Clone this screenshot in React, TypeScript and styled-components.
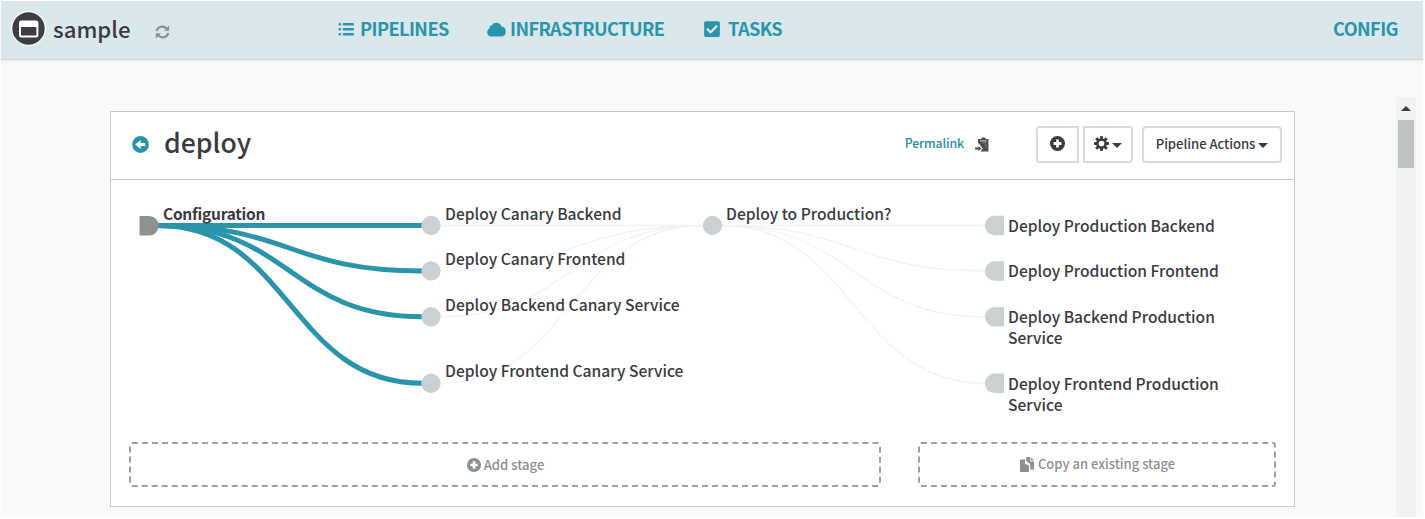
import React from 'react';
import styled, { createGlobalStyle } from 'styled-components';
import { FaCheckSquare } from 'react-icons/fa';

const Global = createGlobalStyle`
  * { box-sizing: border-box; }
  body { margin: 0; background: #fff; font-family: "Noto Sans CJK SC", "Open Sans", sans-serif; color: #3a3a40; overflow: hidden; }
`;

const Page = styled.div`
  width: 1422px;
  height: 516px;
  margin: 1px 0 0 1px;
  background: #f9f9f9;
  display: flex;
  flex-direction: column;
`;

const TopBar = styled.header`
  height: 59px;
  flex: none;
  display: flex;
  align-items: center;
  background: #dae8ec;
  border-bottom: 1px solid #c8d6da;
  box-shadow: 0 2px 2px #f2efee;
  padding: 0 25px 2px 10px;
`;

const Brand = styled.div`
  display: flex;
  align-items: center;
  width: 327px;

  svg:last-child {
    margin-top: 6px;
  }
`;

const T = styled.span<{ $size: number; $ls?: number; $weight?: number }>`
  font-size: ${(p) => p.$size}px;
  letter-spacing: ${(p) => p.$ls ?? 0}px;
  font-weight: ${(p) => p.$weight ?? 500};
  line-height: 1.3;
  white-space: nowrap;
`;

const AppName = styled(T)`
  margin-left: 6px;
  width: 102px;
  margin-top: -1px;
`;

const NavLink = styled.a<{ $width: number; $gap: number }>`
  display: flex;
  align-items: center;
  gap: ${(p) => p.$gap}px;
  width: ${(p) => p.$width}px;
  color: #2a94ab;
`;

const NavText = styled(T).attrs({ $size: 18.2, $weight: 700, $ls: -0.6 })``;

const ConfigLink = styled(NavLink)`
  margin-left: auto;
  justify-content: flex-end;
`;

const Main = styled.main`
  flex: 1;
  min-height: 0;
  display: flex;
  align-items: flex-start;
  padding: 37px 7px 0 109px;
`;

const Panel = styled.section`
  width: 1185px;
  height: 396px;
  margin-top: 14px;
  background: #fff;
  border: 1px solid #c4cacb;
`;

const PanelHeader = styled.div`
  height: 68px;
  display: flex;
  align-items: center;
  border-bottom: 1px solid #c4cacb;
  padding: 0 12px 3px 21px;
`;

const Title = styled(T)`
  margin-left: 15px;
  margin-top: -3px;
`;

const Permalink = styled(T)`
  margin-left: auto;
  margin-right: 11px;
  margin-top: -2px;
  color: #2a8ba3;
`;

const Button = styled.button<{ $width: number; $ml?: number; $corners?: string }>`
  width: ${(p) => p.$width}px;
  height: 37px;
  margin-left: ${(p) => p.$ml ?? 0}px;
  padding: 0 0 1px;
  display: flex;
  align-items: center;
  justify-content: center;
  gap: 3px;
  background: #fff;
  border: 2px solid #d3dbde;
  border-radius: ${(p) => p.$corners ?? '4px'};
  font-family: inherit;
  color: inherit;
`;

const Caret = styled.i`
  margin-top: 3px;
  border: 5px solid transparent;
  border-top-color: #3a3a40;
  border-bottom: 0;
`;

const Graph = styled.div`
  position: relative;
  height: 262px;
`;

const Wires = styled.svg`
  display: block;
`;

const NodeLabel = styled(T)<{ $x: number; $y: number }>`
  position: absolute;
  left: ${(p) => p.$x}px;
  top: ${(p) => p.$y}px;
  line-height: 21px;
  white-space: pre;
`;

const Actions = styled.div`
  display: flex;
  gap: 37px;
  padding: 0 18px;
`;

const AddBox = styled.div<{ $width: number }>`
  width: ${(p) => p.$width}px;
  height: 45px;
  display: flex;
  align-items: center;
  justify-content: center;
  gap: 3px;
  padding-left: 1px;
  border: 2px dashed #9ca09f;
  border-radius: 3px;
  color: #8b908f;
`;

const Scrollbar = styled.div`
  width: 20px;
  height: 420px;
  margin-left: auto;
  display: flex;
  flex-direction: column;
  align-items: center;
  background: #f3f2f1;
  padding-top: 9px;
`;

const ScrollUp = styled.i`
  border: 5px solid transparent;
  border-bottom-color: #3a3a40;
  border-top: 0;
`;

const Thumb = styled.div`
  width: 16px;
  height: 48px;
  margin-top: 9px;
  background: #bfc3c3;
`;

const Logo = () => (
  <svg width="36" height="36" viewBox="0 0 36 36">
    <circle cx="17.5" cy="17.5" r="17.5" fill="#fbfdfd" />
    <circle cx="17.5" cy="17.5" r="16.2" fill="#3d3d43" />
    <rect x="9" y="10.5" width="17.4" height="15" rx="1.5" fill="none" stroke="#fff" strokeWidth="2" />
    <rect x="9" y="10.5" width="17.4" height="5.5" fill="#fff" />
  </svg>
);

const RefreshIcon = () => (
  <svg width="15" height="14" viewBox="0 0 15 14" fill="none" stroke="#8b908f" strokeWidth="2.1">
    <path d="M1.7 6A5.6 5.2 0 0 1 11.6 3.6M13.3 8A5.6 5.2 0 0 1 3.4 10.4" />
    <path d="M14.2.6v5.2H9zM.8 13.4V8.2H6z" fill="#8b908f" stroke="none" />
  </svg>
);

const ListIcon = () => (
  <svg width="17" height="13" viewBox="0 0 17 13" fill="#2a94ab">
    {[0, 5, 10].map((y) => (
      <React.Fragment key={y}>
        <rect x="0.5" y={y} width="2.6" height="2.6" rx="1" />
        <rect x="4.7" y={y} width="11.3" height="2.6" rx="1" />
      </React.Fragment>
    ))}
  </svg>
);

const CloudIcon = () => (
  <svg width="19" height="15" viewBox="0 0 19 15" fill="#2a94ab">
    <path d="M4.4 14.5A4.2 4.2 0 0 1 2.4 6.6 3 3 0 0 1 5 3.2 5.2 5.2 0 0 1 14.4 4.6 5 5 0 0 1 14.6 14.5z" />
  </svg>
);

const PlusCircle = ({ color, size }: { color: string; size: number }) => (
  <svg width={size} height={size} viewBox="0 0 16 16">
    <circle cx="8" cy="8" r="8" fill={color} />
    <path d="M8 3.8v8.4M3.8 8h8.4" stroke="#fff" strokeWidth="3" />
  </svg>
);

const BackIcon = () => (
  <svg width="17" height="17" viewBox="0 0 17 17">
    <circle cx="8.5" cy="8.5" r="8.4" fill="#2a94ab" />
    <path d="M3.2 8.5 8.6 4v2.9h4.6v3.2H8.6V13z" fill="#fff" />
  </svg>
);

const ClipboardIcon = () => (
  <svg width="15" height="15" viewBox="0 0 15 15" fill="#4a4a4f">
    <path d="M3 2h3.2Q6.6.2 8.5.2t2.3 1.8H13.4V14.6H5.4l2.4-3L3 6.4z" />
    <path d="M-.6 10.6H3.4V9.2l3.2 2.4L3.4 14v-1.5H-.6z" />
    <path d="M5 3.9h6.6M3.2 6l2.6 3.2" stroke="#fff" strokeWidth=".8" />
    <path d="M7.2 5.8h4.4M9.4 8h2.4M10 10.4h1.8" stroke="#a5a5a8" strokeWidth=".6" />
  </svg>
);

const GearIcon = () => (
  <svg width="15" height="15" viewBox="0 0 16 16">
    <g fill="#3a3a40">
      {[0, 45, 90, 135].map((a) => (
        <rect key={a} x="6.5" y="0" width="3" height="16" rx=".5" transform={`rotate(${a} 8 8)`} />
      ))}
      <circle cx="8" cy="8" r="5.7" />
    </g>
    <circle cx="8" cy="8" r="3" fill="#fff" />
  </svg>
);

const CopyIcon = () => (
  <svg width="15" height="16" viewBox="0 0 15 16" fill="#8b908f">
    <path d="M0 2.5h5v4.2l4 1.8V15H0z" />
    <path d="M6.2 0h3.9v4.4H14V12.6h-3.8V7L6.2 3.2z" />
    <path d="M10.9.4 14 3.6h-3.1z" />
    <path d="M5.9 3.2 9 6.2" stroke="#8b908f" strokeWidth=".8" />
  </svg>
);

const ROWS = [45.5, 91, 136.8, 203.3];
const curve = (x1: number, y1: number, x2: number, y2: number) => {
  const m = (x1 + x2) / 2;
  return `M${x1} ${y1}C${m} ${y1} ${m} ${y2} ${x2} ${y2}`;
};

const LABELS = [
  { x: 52, y: 22.6, text: 'Configuration', weight: 700, size: 15.5, spacing: -0.25 },
  { x: 334, y: 23, text: 'Deploy Canary Backend' },
  { x: 334, y: 68, text: 'Deploy Canary Frontend' },
  { x: 334, y: 114, text: 'Deploy Backend Canary Service' },
  { x: 334, y: 180, text: 'Deploy Frontend Canary Service' },
  { x: 615, y: 23, text: 'Deploy to Production?' },
  { x: 897, y: 35, text: 'Deploy Production Backend' },
  { x: 897, y: 80, text: 'Deploy Production Frontend' },
  { x: 897, y: 126, text: 'Deploy Backend Production\nService' },
  { x: 897, y: 193, text: 'Deploy Frontend Production\nService' },
];

const App = () => (
  <>
    <Global />
    <Page>
      <TopBar>
        <Brand>
          <Logo />
          <AppName $size={22.2}>sample</AppName>
          <RefreshIcon />
        </Brand>
        <NavLink $width={149} $gap={5}>
          <ListIcon />
          <NavText>PIPELINES</NavText>
        </NavLink>
        <NavLink $width={216} $gap={4}>
          <CloudIcon />
          <NavText>INFRASTRUCTURE</NavText>
        </NavLink>
        <NavLink $width={100} $gap={7}>
          <FaCheckSquare size={18} />
          <NavText>TASKS</NavText>
        </NavLink>
        <ConfigLink $width={80} $gap={0}>
          <NavText>CONFIG</NavText>
        </ConfigLink>
      </TopBar>
      <Main>
        <Panel>
          <PanelHeader>
            <BackIcon />
            <Title $size={26.6}>deploy</Title>
            <Permalink $size={12.4} $ls={-0.15}>Permalink</Permalink>
            <ClipboardIcon />
            <Button $width={43} $ml={46} $corners="4px 0 0 4px">
              <PlusCircle color="#3a3a40" size={15} />
            </Button>
            <Button $width={50} $ml={4} $corners="0 4px 4px 0">
              <GearIcon />
              <Caret />
            </Button>
            <Button $width={140} $ml={9}>
              <T $size={13.1} $ls={-0.05}>Pipeline Actions</T>
              <Caret />
            </Button>
          </PanelHeader>
          <Graph>
            <Wires width="1183" height="262">
              <g fill="none" stroke="#f1f3f3" strokeWidth="1.3">
                {ROWS.map((y) => (
                  <React.Fragment key={y}>
                    <path d={curve(329, y, 592, 45.5)} />
                    <path d={curve(611, 45.5, 874, y)} />
                  </React.Fragment>
                ))}
              </g>
              <g fill="none" stroke="#2a94ab" strokeWidth="5">
                {ROWS.map((y) => (
                  <path key={y} d={curve(47, 45.5, 311, y)} />
                ))}
              </g>
              <path d="M28.5 36h9.5a9.5 9.5 0 0 1 0 19.5h-9.5z" fill="#8d9291" />
              <g fill="#cbd1d3">
                {ROWS.map((y) => (
                  <React.Fragment key={y}>
                    <circle cx="320" cy={y} r="9.7" />
                    <path d={`M893 ${y - 9.7}h-9.5a9.7 9.7 0 0 0 0 19.4h9.5z`} />
                  </React.Fragment>
                ))}
                <circle cx="601.5" cy="45.5" r="9.7" />
              </g>
            </Wires>
            {LABELS.map((l) => (
              <NodeLabel
                key={l.text}
                $size={l.size ?? 15.6}
                $ls={l.spacing}
                $x={l.x}
                $y={l.y}
                $weight={l.weight}
              >
                {l.text}
              </NodeLabel>
            ))}
          </Graph>
          <Actions>
            <AddBox $width={752}>
              <PlusCircle color="#8b908f" size={14} />
              <T $size={13.1}>Add stage</T>
            </AddBox>
            <AddBox $width={358}>
              <CopyIcon />
              <T $size={13}>Copy an existing stage</T>
            </AddBox>
          </Actions>
        </Panel>
        <Scrollbar>
          <ScrollUp />
          <Thumb />
        </Scrollbar>
      </Main>
    </Page>
  </>
);

export default App;
